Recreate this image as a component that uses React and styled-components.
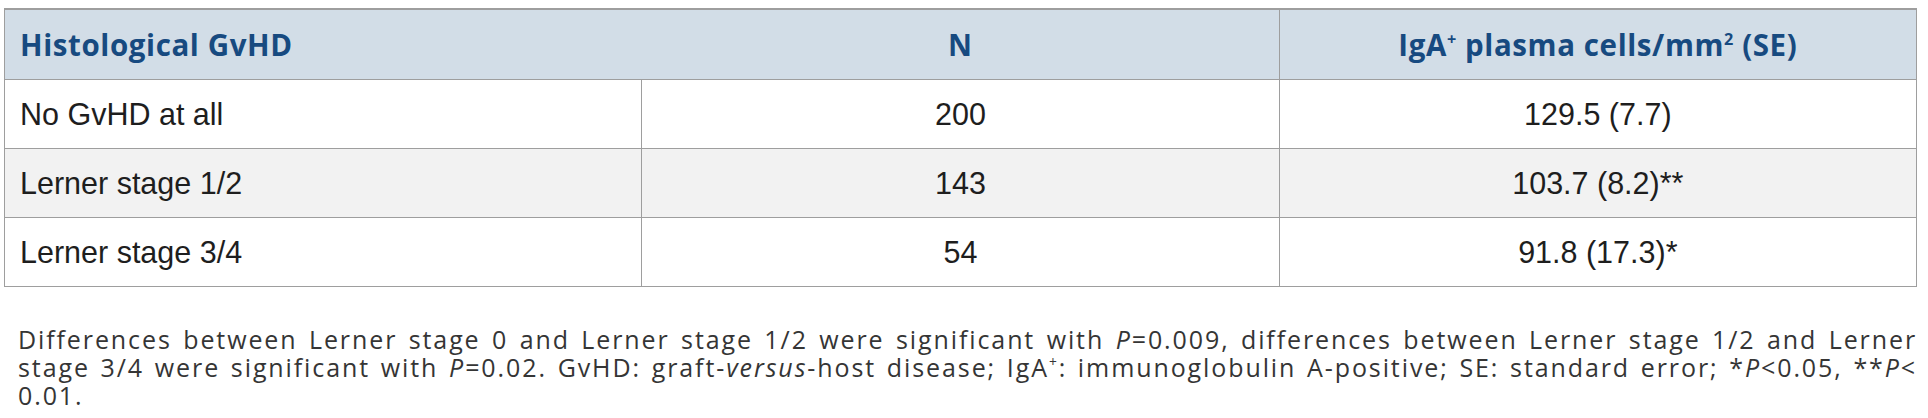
import styled, { createGlobalStyle } from "styled-components";

const GlobalStyle = createGlobalStyle`
    html, body {
        margin: 0;
        padding: 0;
        background: #ffffff;
    }
`;

const Page = styled.div`
    padding: 8px 11px 0 4px;
`;

const Table = styled.table`
    width: 100%;
    border-collapse: collapse;
    table-layout: fixed;
    border: 1px solid #9e9e9e;
    border-top-width: 2px;
    font-family: "Liberation Sans", Arial, sans-serif;
`;

const HeadCell = styled.th`
    height: 69px;
    padding: 0 15px;
    background: #d2dde7;
    color: #174a80;
    font-family: "Open Sans", sans-serif;
    font-weight: 700;
    font-size: 29.5px;
    letter-spacing: 0.6px;
    text-align: ${(p) => (p.$center ? "center" : "left")};
    border-bottom: 1px solid #9e9e9e;
    border-left: ${(p) => (p.$divider ? "1px solid #9e9e9e" : "none")};
`;

const Row = styled.tr`
    background: ${(p) => (p.$shaded ? "#f2f2f2" : "#ffffff")};
    border-bottom: 1px solid #9e9e9e;
`;

const Cell = styled.td`
    height: 68px;
    padding: 0 15px;
    color: #1e1e1e;
    font-size: 30.5px;
    text-align: ${(p) => (p.$center ? "center" : "left")};
    border-left: 1px solid #9e9e9e;
`;

const Sup = styled.sup`
    font-size: 0.55em;
    vertical-align: 0.7em;
    line-height: 0;
`;

const Note = styled.p`
    margin: 38px 0 0 14px;
    font-family: "Open Sans", sans-serif;
    font-size: 25px;
    line-height: 28px;
    letter-spacing: 1.9px;
    word-spacing: -1px;
    color: #353535;
    text-align: justify;
    font-weight: 400;
`;

const rows = [
    { name: "No GvHD at all", n: 200, value: "129.5 (7.7)" },
    { name: "Lerner stage 1/2", n: 143, value: "103.7 (8.2)**" },
    { name: "Lerner stage 3/4", n: 54, value: "91.8 (17.3)*" },
];

export default function App() {
    return (
        <>
            <GlobalStyle />
            <Page>
                <Table>
                    <thead>
                        <tr>
                            <HeadCell>Histological GvHD</HeadCell>
                            <HeadCell $center>N</HeadCell>
                            <HeadCell $center $divider>
                                IgA<Sup>+</Sup> plasma cells/mm<Sup>2</Sup> (SE)
                            </HeadCell>
                        </tr>
                    </thead>
                    <tbody>
                        {rows.map((r, i) => (
                            <Row key={r.name} $shaded={i === 1}>
                                <Cell>{r.name}</Cell>
                                <Cell $center>{r.n}</Cell>
                                <Cell $center>{r.value}</Cell>
                            </Row>
                        ))}
                    </tbody>
                </Table>
                <Note>
                    Differences between Lerner stage 0 and Lerner stage 1/2 were significant with <i>P</i>=0.009,
                    differences between Lerner stage 1/2 and Lerner stage 3/4 were significant with <i>P</i>=0.02.
                    GvHD: graft-<i>versus</i>-host disease; IgA<Sup>+</Sup>: immunoglobulin A-positive; SE: standard
                    error; *<i>P</i>&lt;0.05, **<i>P</i>&lt; 0.01.
                </Note>
            </Page>
        </>
    );
}
